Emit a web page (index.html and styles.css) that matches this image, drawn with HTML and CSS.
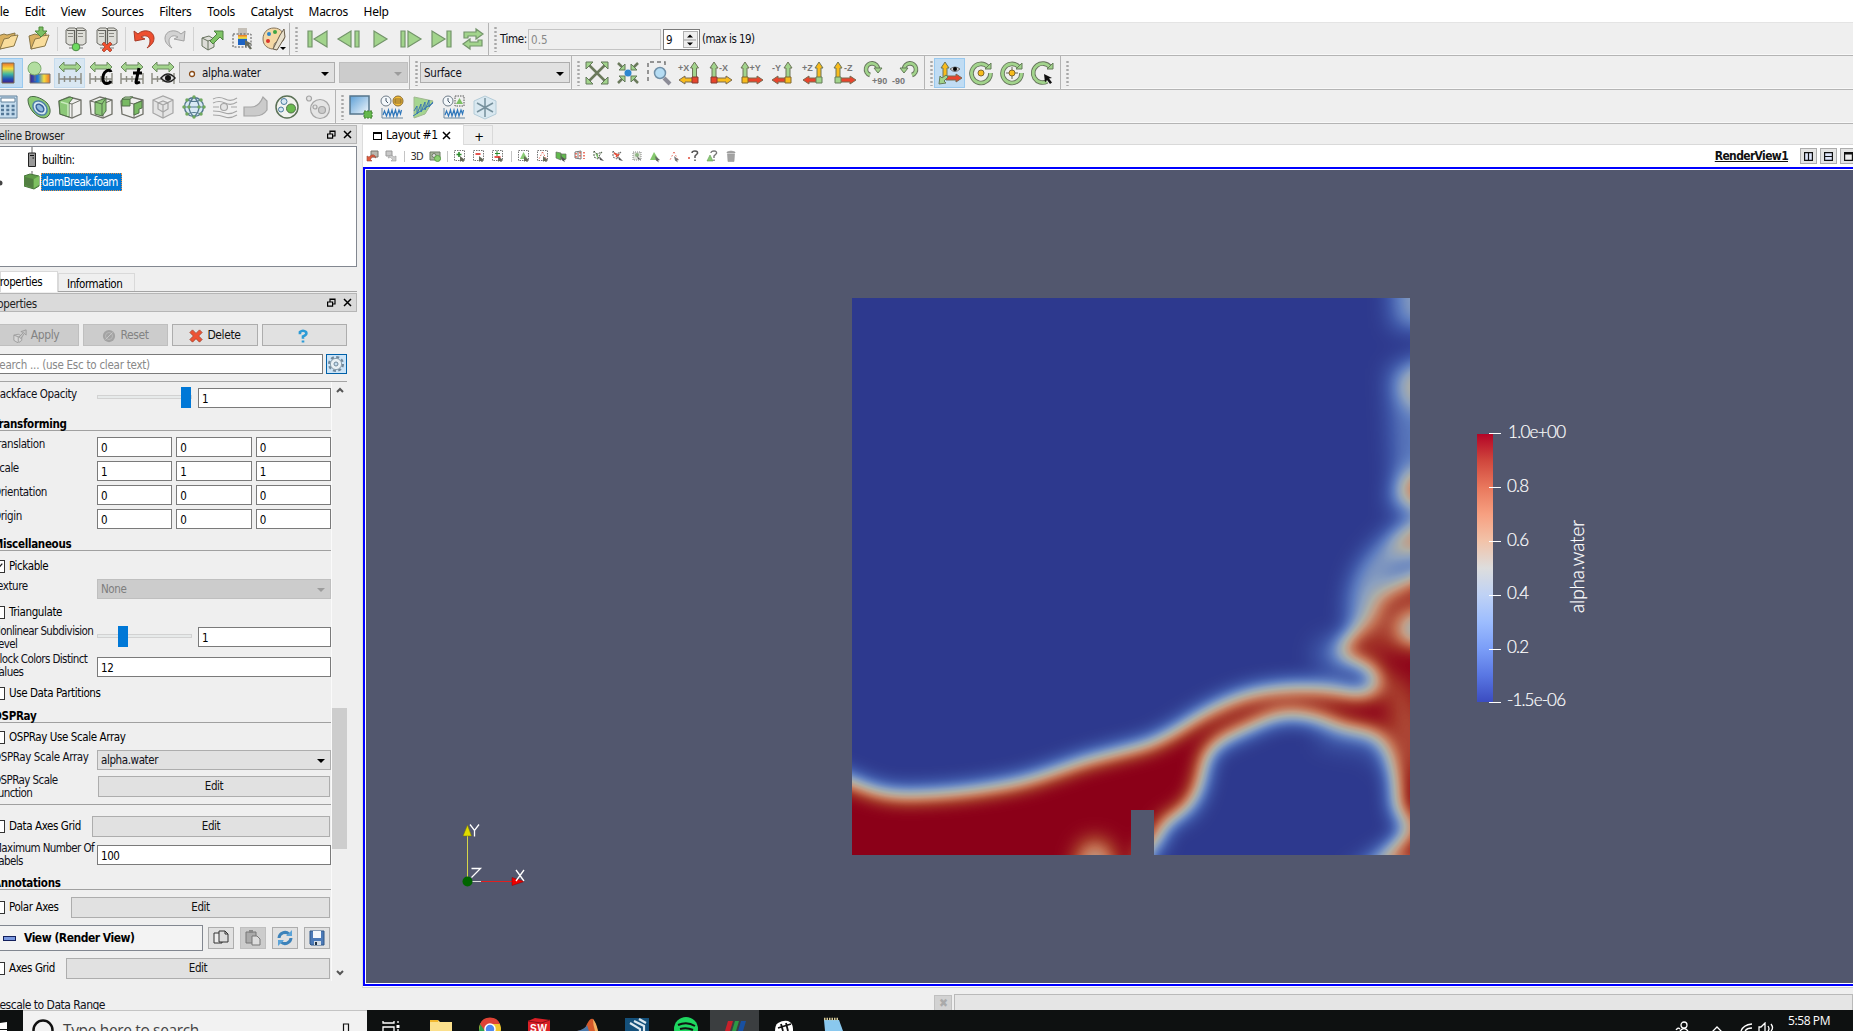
FILE: index.html
```html
<!DOCTYPE html>
<html lang="en">
<head>
<meta charset="utf-8">
<title>ParaView</title>
<link rel="stylesheet" href="styles.css">
</head>
<body>
<svg class="defs" aria-hidden="true">
  <defs>
    <linearGradient id="rainbow" x1="0" y1="0" x2="0" y2="1"><stop offset="0" stop-color="#e8722a"/><stop offset=".28" stop-color="#f8dc3c"/><stop offset=".55" stop-color="#3fb8a0"/><stop offset=".8" stop-color="#1e50b8"/><stop offset="1" stop-color="#45208a"/></linearGradient>
    <linearGradient id="rainbowH"><stop offset="0" stop-color="#45208a"/><stop offset=".4" stop-color="#1e80d8"/><stop offset=".7" stop-color="#f8dc3c"/><stop offset="1" stop-color="#e8722a"/></linearGradient>
    <linearGradient id="sky" x1="0" y1="0" x2="1" y2="1"><stop offset="0" stop-color="#5c9fd6"/><stop offset="1" stop-color="#f4f9fd"/></linearGradient>
    <symbol id="folder" viewBox="0 0 24 24"><path d="M2 9l6-2 3 1 8-2-1 12-14 4z" fill="#d9b060" stroke="#8a7748"/><path d="M4 22l4-10 5-1 2-2 7-1-4 11z" fill="#f9dd9c" stroke="#8a7748"/></symbol>
    <symbol id="servers" viewBox="0 0 24 24"><path d="M2 3l3-2h6l1 1 1-1h6l3 2v13l-3 2H5l-3-2z" fill="#deded8" stroke="#6c6c66"/><path d="M3 3.500h7.500v13M13 3.500h8M12.500 2v15" fill="none" stroke="#62625c" stroke-width="1.200"/><path d="M4 6.500h5M14 6.500h5M4 9.500h5M14 9.500h5" stroke="#8a8a84" stroke-width="1"/><path d="M5 21h14M12 17v4" stroke="#777"/></symbol>
    <symbol id="cube" viewBox="0 0 24 24"><path d="M1 6l10-4 12 3v14l-9 4-12-4z" fill="#f0f0ee" stroke="#6f7068" stroke-width="1.300"/><path d="M1 6l13 3 9-4M14 9v14" fill="none" stroke="#6f7068"/></symbol>
    <symbol id="range" viewBox="0 0 24 24"><path d="M1 6l5-5v3h12V1l5 5-5 5V8H6v3z" fill="#a2d48c" stroke="#6d8a60"/><path d="M1 12v11M23 12v11M1 18h22M6.500 15v6M12 15v6M17.500 15v6" fill="none" stroke="#8b8b82" stroke-width="1.400"/></symbol>
    <symbol id="up" viewBox="0 0 24 24"><path d="M5 1l4 6H7v10H3V7H1z" stroke="#6d7558"/></symbol>
    <symbol id="side" viewBox="0 0 24 24"><path d="M1 19l6-4v2h10v4H7v2z" stroke="#7a6a50"/></symbol>
    <symbol id="selbox" viewBox="0 0 12 12"><path d="M.5.500h10v10H.5z" fill="none" stroke="#777" stroke-dasharray="1.500 1"/><path d="M6 6l5 4-2 .3 1 2-1 .5-1-2-2 1z" fill="#666a58"/></symbol>
    <symbol id="float" viewBox="0 0 9 9"><path d="M3 1h5v5H3zM3 1.500h5" fill="none" stroke="#000" stroke-width="1.200"/><path d="M.6 4h5v4.200h-5z" fill="#ddd" stroke="#000" stroke-width="1.200"/></symbol>
    <symbol id="close" viewBox="0 0 9 9"><path d="M1 1l7 7M8 1L1 8" stroke="#000" stroke-width="1.500"/></symbol>
    <symbol id="clockwave" viewBox="0 0 24 24"><circle cx="6" cy="6" r="5" fill="#f4f8fb" stroke="#6f7c88"/><path d="M6 3v3l2 2" fill="none" stroke="#456"/><path d="M2 13v10h21" fill="none" stroke="#6d89a0"/><path d="M3 20l1.500-4 2 5 2-6 1.500 6 2-6 1.500 6 2-6 1.500 6 2-6 1.500 4 1-4" fill="none" stroke="#2f77bb" stroke-width="1.200"/></symbol>
  </defs>
</svg>

<nav class="menubar"><span class="cut">File</span><span>Edit</span><span>View</span><span>Sources</span><span>Filters</span><span>Tools</span><span>Catalyst</span><span>Macros</span><span>Help</span></nav>

<div class="toolbar">
  <div class="group shifted">
    <i class="tb"><svg><use href="#folder"/></svg></i>
    <i class="tb"><svg viewBox="0 0 24 24"><use href="#folder"/><path d="M12 0h4v4h4l-6 6-6-6h4z" fill="#7cbf62" stroke="#4f8a3c"/></svg></i>
    <i class="sep"></i>
    <i class="tb"><svg viewBox="0 0 24 24"><use href="#servers"/><circle cx="12" cy="20" r="3.800" fill="#6edb60" stroke="#4b8a45"/></svg></i>
    <i class="tb"><svg viewBox="0 0 24 24"><use href="#servers"/><path d="M9 15l3 3 3-3 2 2-3 3 3 3-2 2-3-3-3 3-2-2 3-3-3-3z" fill="#f0502e" stroke="#9e3a26" stroke-width=".7"/></svg></i>
    <i class="sep"></i>
    <i class="tb"><svg viewBox="0 0 24 24"><path d="M2 4l1 10 10-2-4-2c5-3 9 0 9 4 0 3-1 5-3 7 5-3 7-6 7-10C22 4 12 1 6 7z" fill="#ee4f30" stroke="#a83a26"/></svg></i>
    <i class="tb"><svg viewBox="0 0 24 24"><path d="M22 4l-1 10-10-2 4-2c-5-3-9 0-9 4 0 3 1 5 3 7-5-3-7-6-7-10C2 4 12 1 18 7z" fill="#d2d2d2" stroke="#a2a2a2"/></svg></i>
    <i class="sep"></i>
    <i class="tb"><svg viewBox="0 0 24 24"><path d="M2 11l7-2 5 3v8l-6 3-6-4z" fill="#ddddd8" stroke="#67725e"/><path d="M2 11l6 3 6-2M8 14v9" fill="none" stroke="#67725e"/><path d="M10 14l7-7-3-3h9v9l-3-3-7 7z" fill="#7fc466" stroke="#4f8040"/></svg></i>
    <i class="tb"><svg viewBox="0 0 24 24"><path d="M7 1h9v7H7z" fill="#c5c0b8"/><path d="M7 8h9v10H7z" fill="url(#rainbow)"/><path d="M7 12h9v6H7z" fill="#1c63c4"/><path d="M2 7h18v13H2z" fill="none" stroke="#555" stroke-dasharray="2 1.500"/><path d="M14 13l7 4-3 .5 3 4-2 1-3-4-2 2z" fill="#666a5c"/></svg></i>
    <i class="tb"><svg viewBox="0 0 24 24"><path d="M12 1C5 1 1 6 1 12s4 9 9 10c3 0 1-4 3-6s8 1 9-4-3-11-10-11z" fill="#f4d8a4" stroke="#84745c"/><circle cx="7" cy="7" r="2" fill="#2d86cc"/><circle cx="13" cy="5" r="2" fill="#3ea442"/><circle cx="6" cy="14" r="2" fill="#db352a"/><path d="M11 22l7-14 4-6 1 8-8 13z" fill="#e8e0cc" stroke="#675b48"/><path d="M18 20h6l-3 3z" fill="#000"/></svg></i>
  </div>
  <div class="group">
    <i class="grip"></i>
    <i class="tb"><svg viewBox="0 0 24 24" class="play"><path d="M2 4h4v16H2zM21 4v16L8 12z"/></svg></i>
    <i class="tb"><svg viewBox="0 0 24 24" class="play"><path d="M18 4h4v16h-4zM14 4v16L1 12z"/></svg></i>
    <i class="tb"><svg viewBox="0 0 24 24" class="play"><path d="M6 4v16l13-8z"/></svg></i>
    <i class="tb"><svg viewBox="0 0 24 24" class="play"><path d="M2 4h4v16H2zM9 4v16l13-8z"/></svg></i>
    <i class="tb"><svg viewBox="0 0 24 24" class="play"><path d="M17 4h4v16h-4zM2 4v16l13-8z"/></svg></i>
    <i class="tb"><svg viewBox="0 0 24 24" class="play"><path d="M3 11V5h12V2l7 5-7 5V9H7v2zM21 13v6H9v3l-7-5 7-5v3h8v-2z"/></svg></i>
  </div>
  <div class="group timegroup">
    <i class="grip"></i>
    <span class="tlabel">Time:</span><span class="time">0.5</span>
    <span class="spin"><b>9</b><i><svg viewBox="0 0 12 16"><path d="M0 8h12" stroke="#999"/><path d="M3 5.500h6L6 2.500zM3 10.500h6l-3 3z"/></svg></i></span><span class="max">(max is 19)</span>
  </div>
</div>

<div class="toolbar">
  <div class="group shifted">
    <i class="tb on"><svg viewBox="0 0 24 24"><path d="M6 2h12v20H6z" fill="url(#rainbow)" stroke="#7a6c50"/></svg></i>
    <i class="tb"><svg viewBox="0 0 24 24"><path d="M3 13h20v9H3z" fill="url(#rainbowH)" stroke="#777"/><circle cx="7.500" cy="7.500" r="6.500" fill="#b2dea0" stroke="#7cab6c"/><path d="M8 14v6" stroke="#777"/></svg></i>
    <i class="tb soft"><svg><use href="#range"/></svg></i>
    <i class="tb"><svg viewBox="0 0 24 24"><use href="#range"/><path d="M22 11c-1-4-9-1-8 8 1 5 6 4 8 1" fill="none" stroke="#000" stroke-width="3"/></svg></i>
    <i class="tb"><svg viewBox="0 0 24 24"><use href="#range"/><path d="M19 7l-3 14q0 2 4 0M13 12h9" fill="none" stroke="#000" stroke-width="3"/></svg></i>
    <i class="tb"><svg viewBox="0 0 24 24"><use href="#range"/><path d="M10 17q7-8 14 0-7 8-14 0z" fill="#ddd" stroke="#222" stroke-width="1.500"/><circle cx="17" cy="17" r="3" fill="#111"/></svg></i>
    <span class="select array"><svg viewBox="0 0 8 8" class="pt"><circle cx="4" cy="4" r="2.500" fill="#fff" stroke="#8a4b16" stroke-width="1.300"/></svg>alpha.water<em></em></span>
    <span class="select comp off"><em></em></span>
  </div>
  <div class="group repgroup"><i class="grip"></i><span class="select rep">Surface<em></em></span></div>
  <div class="group camgroup">
    <i class="grip"></i>
    <i class="tb"><svg viewBox="0 0 24 24"><path d="M4 4l16 16M20 4L4 20" stroke="#6b7a5c" stroke-width="2.500"/><path d="M1 1h7L1 8zM23 1h-7l7 7zM1 23h7l-7-7zM23 23h-7l7-7z" fill="#a2d48c" stroke="#63785a"/></svg></i>
    <i class="tb"><svg viewBox="0 0 24 24"><path d="M2 2l6 6M22 2l-6 6M2 22l6-6M22 22l-6-6" stroke="#6b7a5c" stroke-width="2.500"/><path d="M9 3v6H3zM15 3v6h6zM9 21v-6H3zM15 21v-6h6z" fill="#a2d48c" stroke="#63785a"/><circle cx="12" cy="12" r="3.500" fill="#2d86d0"/></svg></i>
    <i class="tb"><svg viewBox="0 0 24 24"><path d="M1 20V1h17v4" fill="none" stroke="#777" stroke-width="1.500" stroke-dasharray="4 3"/><path d="M17 17l6 6" stroke="#8d8d98" stroke-width="4"/><circle cx="13" cy="12" r="5.500" fill="#b5dcf3" stroke="#7090a8" stroke-width="1.500"/></svg></i>
    <i class="tb"><svg viewBox="0 0 24 24"><use href="#up" x="11.500" fill="#a2d48c"/><use href="#side" fill="#f8bb1c"/><path d="M14 16h6v6h-6z" class="rd"/><text x="0" y="10">+X</text></svg></i>
    <i class="tb"><svg viewBox="0 0 24 24"><use href="#up" fill="#a2d48c"/><use href="#side" fill="#f8bb1c" transform="matrix(-1 0 0 1 24 0)"/><path d="M2 16h6v6H2z" class="rd"/><text x="10" y="10">-X</text></svg></i>
    <i class="tb"><svg viewBox="0 0 24 24"><use href="#up" fill="#a2d48c"/><use href="#side" fill="#e8442c" transform="matrix(-1 0 0 1 24 0)"/><path d="M2 16h6v6H2z" class="yl"/><text x="9.500" y="10">+Y</text></svg></i>
    <i class="tb"><svg viewBox="0 0 24 24"><use href="#up" x="12" fill="#a2d48c"/><use href="#side" fill="#e8442c"/><path d="M14 16h6v6h-6z" class="yl"/><text x="1" y="10">-Y</text></svg></i>
    <i class="tb"><svg viewBox="0 0 24 24"><use href="#up" x="12" fill="#f8bb1c"/><use href="#side" fill="#e8442c"/><path d="M14 16h6v6h-6z" class="gn"/><text x="0" y="10">+Z</text></svg></i>
    <i class="tb"><svg viewBox="0 0 24 24"><use href="#up" fill="#f8bb1c"/><use href="#side" fill="#e8442c" transform="matrix(-1 0 0 1 24 0)"/><path d="M2 16h6v6H2z" class="gn"/><text x="11" y="10">-Z</text></svg></i>
    <i class="tb"><svg viewBox="0 0 24 24"><path d="M6 14A6 6 0 1 1 14 8" class="ro"/><path d="M6 14A6 6 0 1 1 14 8" class="ri"/><path d="M10 7h8l-4 5z" class="gn"/><text x="8" y="23">+90</text></svg></i>
    <i class="tb"><svg viewBox="0 0 24 24"><path d="M17 14A6 6 0 1 0 9 8" class="ro"/><path d="M17 14A6 6 0 1 0 9 8" class="ri"/><path d="M13 7H5l4 5z" class="gn"/><text x="-3" y="23">-90</text></svg></i>
  </div>
  <div class="group rotgroup">
    <i class="grip"></i>
    <i class="tb on"><svg viewBox="0 0 24 24"><use href="#up" x="2" fill="#f8bb1c"/><use href="#side" fill="#e8442c" transform="matrix(-1 0 0 1 25 -2)"/><path d="M1 23l1-8 2 2 4-3 2 2-4 4 2 2z" class="gn"/><path d="M12 8q5-4 10 0-5 5-10 0z" fill="#ccc" stroke="#555" stroke-width=".8"/><circle cx="17" cy="8" r="2"/></svg></i>
    <i class="tb"><svg viewBox="0 0 24 24"><path d="M19 6A9.500 9.500 0 1 0 21.500 12" class="ro"/><path d="M19 6A9.500 9.500 0 1 0 21.500 12" class="ri"/><path d="M22 2v6h-6z" class="gn"/><circle cx="12" cy="12" r="3" class="yl"/></svg></i>
    <i class="tb"><svg viewBox="0 0 24 24"><path d="M19 6A9.500 9.500 0 1 0 21.500 12" class="ro"/><path d="M19 6A9.500 9.500 0 1 0 21.500 12" class="ri"/><path d="M22 2v6h-6z" class="gn"/><path d="M12 6v12M6 12h12" stroke="#665"/><circle cx="12" cy="12" r="3" class="yl"/></svg></i>
    <i class="tb"><svg viewBox="0 0 24 24"><path d="M19 6A9.500 9.500 0 1 0 16 20.500" class="ro"/><path d="M19 6A9.500 9.500 0 1 0 16 20.500" class="ri"/><path d="M22 2v6h-6z" class="gn"/><path d="M13 13l8 4-3 .6 3 4-2 1.400-3-4-2 2.500z" fill="#111"/></svg></i>
  </div>
  <div class="group"><i class="grip"></i></div>
</div>

<div class="toolbar">
  <div class="group shifted filters">
    <i class="tb"><svg viewBox="0 0 24 24"><path d="M3 1h18v22H3z" fill="#c5dcee" stroke="#60809a"/><path d="M5 3h14v4H5z" fill="#fff" stroke="#60809a"/><path d="M5 11h14M5 15h14M5 19h14" stroke="#547898" stroke-width="2.500" stroke-dasharray="3 2.300"/></svg></i>
    <i class="tb"><svg viewBox="0 0 24 24"><path d="M1 5C1-1 13 1 20 8c5 6 4 14-3 15C9 23 1 13 1 5z" fill="#8bca74" stroke="#4a6b48"/><ellipse cx="13" cy="13" rx="8" ry="6" transform="rotate(45 13 13)" fill="#d6e8f2" stroke="#4c7fa8" stroke-width="1.500"/><ellipse cx="13" cy="13" rx="4.500" ry="3" transform="rotate(45 13 13)" fill="#8fb9dc" stroke="#365f9a" stroke-width="1.500"/></svg></i>
    <i class="tb"><svg viewBox="0 0 24 24"><use href="#cube"/><path d="M1 6l11-4 3 1-4 5v14l-9-3z" fill="#8cc878" stroke="#52704a"/><path d="M3 7l7 2v12" fill="none" stroke="#c9eabd" stroke-width="1.500"/></svg></i>
    <i class="tb"><svg viewBox="0 0 24 24"><use href="#cube"/><path d="M6 7l11-4v13l-4 5-7-2z" fill="#8cc878" stroke="#52704a"/><path d="M6 7l7 2v12M13 9l4-6" fill="none" stroke="#52704a"/></svg></i>
    <i class="tb"><svg viewBox="0 0 24 24"><use href="#cube"/><path d="M2 4h8v7H2zM14 9l8-3v7l-3 1v4l-5 2z" fill="#78ba62" stroke="#52704a"/><path d="M2 4l3-2h8l-3 2z" fill="#bce0ae" stroke="#52704a"/></svg></i>
    <i class="tb"><svg viewBox="0 0 24 24" class="faint"><path d="M2 5l10-4 10 4v13l-10 5-10-5zM2 5l10 5 10-5M12 10v13M7 8l5-2 5 2v6l-5 3-5-3z"/></svg></i>
    <i class="tb"><svg viewBox="0 0 24 24"><circle cx="12" cy="12" r="9.500" fill="#d8e9f4" stroke="#53788e" stroke-width="1.400"/><path d="M2 12h20M12 2q-10 10 0 20M12 2q10 10 0 20M5 5q7 3 14 0M5 19q7-3 14 0" fill="none" stroke="#53788e" stroke-width="1.200"/><path d="M12 2v.1M7 12v.1M17 12v.1M12 22v.1M2 12v.1M22 12v.1M5 5v.1M19 5v.1M5 19v.1M19 19v.1" stroke="#6fa95e" stroke-width="3.500" stroke-linecap="round"/></svg></i>
    <i class="tb"><svg viewBox="0 0 24 24" class="faint"><path d="M0 4q6-3 12 0t12-1M0 8q6-3 12 0t12-1M0 16q7 0 12 2t12-2M0 20q7 0 12 2t12-2M0 12h6M18 12h6" fill="none"/><circle cx="11" cy="12" r="3.500"/></svg></i>
    <i class="tb"><svg viewBox="0 0 24 24" class="faint"><path class="fl" d="M0 12h7q8 0 12-10l4 4v9q-4 6-12 6H0z"/></svg></i>
    <i class="tb"><svg viewBox="0 0 24 24"><circle cx="12" cy="12" r="11" fill="#f2f3ef" stroke="#5b7156" stroke-width="1.500"/><circle cx="9" cy="6.500" r="3" fill="#d6e8f4" stroke="#4b7ca0"/><circle cx="6" cy="14.500" r="2.500" fill="#d6e8f4" stroke="#4b7ca0"/><circle cx="16" cy="13.500" r="4.500" fill="#69ba4e" stroke="#52704a"/></svg></i>
    <i class="tb"><svg viewBox="0 0 24 24" class="faint"><circle cx="3" cy="3.500" r="2.500"/><circle cx="14" cy="14" r="9.500"/><circle cx="9" cy="12" r="2"/><circle cx="16" cy="15" r="3.500" class="fl"/></svg></i>
  </div>
  <div class="group datagroup">
    <i class="grip"></i>
    <i class="tb"><svg viewBox="0 0 24 24"><path d="M1 1h19v18H1z" fill="url(#sky)" stroke="#55768c" stroke-width="1.500"/><path d="M15 16h8v7h-8z" fill="#64b84c" stroke="#417a32" stroke-dasharray="2 1"/></svg></i>
    <i class="tb"><svg viewBox="0 0 24 24"><use href="#clockwave"/><circle cx="18" cy="6" r="5" fill="#f5bd37" stroke="#8a6c30"/><path d="M15 4h6v4h-6zM15 6h6" fill="none" stroke="#8a6c30"/></svg></i>
    <i class="tb"><svg viewBox="0 0 24 24"><path d="M3 2l19 4-8 13-11 4z" fill="#a5d590" stroke="#a0b890"/><path d="M2 21L22 8" stroke="#2f77bb"/><path d="M3 16l3-5 0 8 4-10 0 8 4-10 0 8 4-10 0 7 4-5" fill="none" stroke="#3b76b0"/></svg></i>
    <i class="tb"><svg viewBox="0 0 24 24"><use href="#clockwave"/><path d="M13 1h9v10h-9z" fill="none" stroke="#555" stroke-dasharray="1.500 1"/><path d="M17.500 3l3.500 6h-7z" fill="#7cc064"/></svg></i>
    <i class="tb"><svg viewBox="0 0 24 24"><path d="M1 6L12 1l11 5v13l-11 5-11-5z" fill="#d9e8f0" stroke="#b4ccd8"/><path d="M12 3v19M4 8l16 9M20 8L4 17" stroke="#76909c" stroke-width="1.500"/></svg></i>
  </div>
</div>

<main class="work">
  <aside class="dock">
    <header class="dtitle"><span class="pipe">Pipeline Browser</span><svg><use href="#float"/></svg><svg><use href="#close"/></svg></header>
    <section class="tree">
      <div class="node"><svg class="srv" viewBox="0 0 8 20"><path d="M4 0v6" stroke="#666"/><path d="M.5 6h7v13.500h-7z" fill="#999" stroke="#222"/><path d="M2 8.500h4M4.500 11h1.500" stroke="#111"/></svg><span>builtin:</span></div>
      <div class="node sel"><svg class="eye" viewBox="0 0 3 8"><circle cx="0" cy="4" r="2.500" fill="#444"/></svg><svg class="cb" viewBox="0 0 16 18"><path d="M8 0v4" stroke="#666"/><path d="M0 5l6-2 9 2v10l-5 3-10-3z" fill="#5f9a48" stroke="#47753a"/><path d="M1 6l8 2v9l-8-3z" fill="#527f42"/><path d="M10 8l5-3v9l-5 3z" fill="#7dc060"/></svg><span>damBreak.foam</span></div>
    </section>
    <div class="dtabs"><span class="act">Properties</span><span>Information</span></div>
    <header class="dtitle"><span class="prop">Properties</span><svg><use href="#float"/></svg><svg><use href="#close"/></svg></header>
    <div class="actions">
      <span class="btn dis a1"><svg viewBox="0 0 16 16"><path d="M1 7l5-1 4 2v5l-4 3-5-3zM1 7l5 2 4-1M6 9v6" fill="#d7d7d7" stroke="#999"/><path d="M7 9l5-5-3-1 6-2v6l-2-2-4 6z" fill="#c5c5c5" stroke="#9a9a9a"/></svg>Apply</span>
      <span class="btn dis a2"><svg viewBox="0 0 16 16"><circle cx="8" cy="8" r="7" fill="#a3a3a3"/><circle cx="8" cy="8" r="4" fill="none" stroke="#bbb"/><path d="M4 12l8-8" stroke="#ccc"/></svg>Reset</span>
      <span class="btn a3"><svg viewBox="0 0 16 16"><path d="M4 1l4 4 4-4 3 3-4 4 4 4-3 3-4-4-4 4-3-3 4-4-4-4z" fill="#ee5233" stroke="#a54a35"/></svg>Delete</span>
      <span class="btn a4"><svg viewBox="0 0 16 16"><path d="M4.500 6V3.500q3.500-3 7 0 1.500 3-3.500 5V11M8 13v2.500" fill="none" stroke="#2c9bd6" stroke-width="3"/></svg></span>
    </div>
    <div class="find"><span class="search">Search ... (use Esc to clear text)</span><span class="gear"><svg viewBox="0 0 18 18"><circle cx="9" cy="9" r="6.800" fill="none" stroke="#72889a" stroke-width="2.500" stroke-dasharray="3 2.340"/><circle cx="9" cy="9" r="5.600" fill="#eaf1f5" stroke="#8ca0ae"/><circle cx="9" cy="9" r="2" fill="#c4ddef" stroke="#73899a"/></svg></span></div>
    <div class="scroll">
      <div class="props">
        <div class="row first"><label>Backface Opacity</label><span class="slider full"><i></i></span><span class="in w">1</span></div>
        <h4>Transforming</h4>
        <div class="row vec"><label>Translation</label><span class="in">0</span><span class="in">0</span><span class="in">0</span></div>
        <div class="row vec"><label>Scale</label><span class="in">1</span><span class="in">1</span><span class="in">1</span></div>
        <div class="row vec"><label>Orientation</label><span class="in">0</span><span class="in">0</span><span class="in">0</span></div>
        <div class="row vec"><label>Origin</label><span class="in">0</span><span class="in">0</span><span class="in">0</span></div>
        <h4 class="gap3">Miscellaneous</h4>
        <div class="row chk pick"><i class="box"><svg viewBox="0 0 13 13"><path d="M2 6l3 4 6-7" fill="none" stroke="#222" stroke-width="1.500"/></svg></i>Pickable</div>
        <div class="row tex"><label>Texture</label><span class="select none off">None<em></em></span></div>
        <div class="row chk tri"><i class="box"></i>Triangulate</div>
        <div class="row non"><label class="two">Nonlinear Subdivision<br>Level</label><span class="slider low"><i></i></span><span class="in w">1</span></div>
        <div class="row blk"><label class="two">Block Colors Distinct<br>Values</label><span class="in">12</span></div>
        <div class="row chk use"><i class="box"></i>Use Data Partitions</div>
        <h4 class="gap1">OSPRay</h4>
        <div class="row chk osp"><i class="box"></i>OSPRay Use Scale Array</div>
        <div class="row arr"><label>OSPRay Scale Array</label><span class="select">alpha.water<em></em></span></div>
        <div class="row fun"><label class="two">OSPRay Scale<br>Function</label><span class="btn">Edit</span></div>
        <div class="row chk dax"><i class="box"></i><b>Data Axes Grid</b><span class="btn">Edit</span></div>
        <div class="row mx"><label class="two">Maximum Number Of<br>Labels</label><span class="in">100</span></div>
        <h4 class="gap2">Annotations</h4>
        <div class="row chk pol"><i class="box"></i><b>Polar Axes</b><span class="btn">Edit</span></div>
        <div class="row view"><span class="vbtn"><i></i>View (Render View)</span>
          <span class="btn ic"><svg viewBox="0 0 16 16"><path d="M1 3h6l2 2v8H1z" fill="#eee" stroke="#333"/><path d="M6 1h6l3 3v8H6z" fill="#ddd" stroke="#333"/><path d="M12 1v3h3" fill="none" stroke="#333"/></svg></span>
          <span class="btn ic dis"><svg viewBox="0 0 16 16"><path d="M1 2h10v11H1z" fill="#aaa" stroke="#777"/><path d="M4 0h4v3H4z" fill="#888"/><path d="M7 6h5l3 3v6H7z" fill="#ddd" stroke="#777"/></svg></span>
          <span class="btn ic"><svg viewBox="0 0 16 16"><path d="M2 8a6 6 0 0 1 10-4M14 8a6 6 0 0 1-10 4" fill="none" stroke="#3c82ba" stroke-width="3"/><path d="M9 6h6V0zM7 10H1v6z" fill="#5ba3d8"/></svg></span>
          <span class="btn ic"><svg viewBox="0 0 16 16"><path d="M1 1h14v14H2l-1-1z" fill="#4c7ab8" stroke="#305888"/><path d="M4 1h8v7H4z" fill="#f5f8fc"/><path d="M5 11h7v4H5z" fill="#d4dde6"/><path d="M6 12h2v3H6z" fill="#234"/></svg></span>
        </div>
        <div class="row chk axg"><i class="box"></i><b>Axes Grid</b><span class="btn">Edit</span></div>
      </div>
      <div class="bar"><svg viewBox="0 0 8 6"><path d="M1 5l3-3 3 3" fill="none" stroke="#555" stroke-width="2"/></svg><i></i><svg viewBox="0 0 8 6"><path d="M1 1l3 3 3-3" fill="none" stroke="#555" stroke-width="2"/></svg></div>
    </div>
  </aside>

  <section class="pane">
    <div class="ltabs"><span class="lt act"><i></i>Layout #1<svg viewBox="0 0 9 9"><use href="#close"/></svg></span><span class="lt plus">+</span></div>
    <div class="vtools">
      <svg viewBox="0 0 12 12"><path d="M5 1h7v6H5z" fill="#b9b7ae" stroke="#77766e"/><path d="M1 6v5h5L4.500 9.500Q6 5 10 8 8 2 3 7z" fill="#e05a3c" stroke="#994836" stroke-width=".6"/></svg>
      <svg viewBox="0 0 12 12"><path d="M1 1h6v5H1z" fill="#c8c8c8" stroke="#999"/><path d="M11 6v5H6l1.500-1.500Q6 6 3 8 5 3 9 7z" fill="#ccc" stroke="#999" stroke-width=".6"/></svg>
      <i class="vs"></i><span class="d3">3D</span>
      <svg viewBox="0 0 12 12"><path d="M1 2h10v8H1z" fill="#a7b49c" stroke="#6f7a66"/><circle cx="5" cy="5.500" r="2" fill="#ddd" stroke="#6f7a66"/><circle cx="8.500" cy="8.500" r="3" fill="#8bd070" stroke="#5ca048"/></svg>
      <i class="vs"></i>
      <svg viewBox="0 0 12 12"><use href="#selbox"/><path d="M5 2v5M2.500 4.500h5" stroke="#2a8a2a" stroke-width="1.600"/></svg>
      <svg viewBox="0 0 12 12"><use href="#selbox"/><path d="M2.500 4h5" stroke="#e02a22" stroke-width="1.600"/></svg>
      <svg viewBox="0 0 12 12"><use href="#selbox"/><path d="M5 1v5M3 3.500h5" stroke="#2a8a2a"/><path d="M2.500 7h6" stroke="#e02a22" stroke-width="1.600"/></svg>
      <i class="vs"></i>
      <svg viewBox="0 0 12 12"><path d="M5.500 2l4 7H2z" fill="#8acb74"/><use href="#selbox"/></svg>
      <svg viewBox="0 0 12 12"><use href="#selbox"/><path d="M5.500 2l4 7M5.500 2L2 9" stroke="#e66a5a" stroke-dasharray="1.500 1.500"/></svg>
      <svg viewBox="0 0 12 12"><path d="M1 2l5 1v7L1 8zM6 4h5v5H6z" fill="#62b94e" stroke="#66705e" stroke-width=".7"/><path d="M6 6l5 4-2 .3 1 2-3-2z" fill="#555"/></svg>
      <svg viewBox="0 0 12 12"><path d="M1 2l6-1v8l-6-1zM4 2v6" fill="none" stroke="#777"/><path d="M2 3v5M6 2v6M10 2v7" stroke="#e6503c" stroke-dasharray="1.500 1.500" stroke-width="1.500"/></svg>
      <svg viewBox="0 0 12 12"><path d="M1 1l3 3 5-2M1 1v6l4 2M4 4l2 5M9 2L6 6" fill="none" stroke="#4d5f48" stroke-dasharray="2 1"/><path d="M2 3l3 2v4z" fill="#7abf66"/><path d="M6 6l5 5-4-1z" fill="#555"/></svg>
      <svg viewBox="0 0 12 12"><path d="M1 1l3 3 5-2M1 1v6l4 2M4 4l2 5M9 2L6 6" fill="none" stroke="#666" stroke-dasharray="2 1"/><path d="M2 3l3 2M4 7l3-3" stroke="#e6503c" stroke-width="1.700"/><path d="M6 6l5 5-4-1z" fill="#555"/></svg>
      <svg viewBox="0 0 12 12"><path d="M2 2h8v8H2z" fill="#e0e4dc" stroke="#888" stroke-dasharray="1 1"/><circle cx="6" cy="5" r="2" fill="#8fb584"/><path d="M6 6l4 4-3-1z" fill="#555"/></svg>
      <svg viewBox="0 0 12 12"><path d="M5 2l5 8H1z" fill="#84c76c"/><path d="M6 6l5 4-2 .5 1 2-3-2z" fill="#666"/></svg>
      <svg viewBox="0 0 12 12"><path d="M6 2l4 8M6 2L2 10" stroke="#e66a5a" stroke-dasharray="1.500 2"/><path d="M6 6l5 4-2 .5 1 2-3-2z" fill="#777"/></svg>
      <svg viewBox="0 0 12 12"><path d="M5 3q0-2 3-2t2.500 2.500L8 6v2M8 9.500V11" fill="none" stroke="#555" stroke-width="1.500"/><circle cx="2" cy="8" r="1" fill="#e04a38"/></svg>
      <svg viewBox="0 0 12 12"><path d="M4 5l3 6H1z" fill="#8acb74" stroke="#6a9a5a" stroke-width=".6"/><path d="M5 3q0-2 3-2t2.500 2.500L8 6v2M8 9.500V11" fill="none" stroke="#777" stroke-width="1.400"/></svg>
      <svg viewBox="0 0 12 12"><path d="M2 2q4-2 8 0v1H2zM2.500 4h7L9 11.500H3z" fill="#a3a3a3" stroke="#999" stroke-width=".6"/></svg>
      <b class="rv">RenderView1</b>
      <span class="wb"><svg viewBox="0 0 9 9"><path d="M.6.600h7.800v7.800H.6zM4.500 0v9" fill="#dfe6fa" stroke="#111" stroke-width="1.200"/></svg></span>
      <span class="wb"><svg viewBox="0 0 9 9"><path d="M.6.600h7.800v7.800H.6zM0 4.500h9" fill="#dfe6fa" stroke="#111" stroke-width="1.200"/></svg></span>
      <span class="wb"><svg viewBox="0 0 9 9"><path d="M.6.600h7.800v7.800H.6z" fill="#eee" stroke="#111" stroke-width="1.200"/><path d="M0 1.500h9" stroke="#111" stroke-width="2"/></svg></span>
    </div>
    <div class="view">
      <svg viewBox="366 170 1487 813" width="1487" height="813">
        <defs>
          <filter id="field" filterUnits="userSpaceOnUse" x="-60" y="-60" width="680" height="680" color-interpolation-filters="sRGB">
            <feGaussianBlur stdDeviation="11"/>
            <feComponentTransfer>
              <feFuncR type="table" tableValues=".18 .25 .37 .54 .675 .77 .753 .64 .549"/>
              <feFuncG type="table" tableValues=".227 .345 .49 .624 .682 .604 .424 .208 0"/>
              <feFuncB type="table" tableValues=".557 .66 .75 .753 .66 .51 .314 .16 .098"/>
            </feComponentTransfer>
          </filter>
          <clipPath id="domain"><path d="M0 0h558v557H302V512H279v45H0z"/></clipPath>
          <linearGradient id="coolwarm" x1="0" y1="0" x2="0" y2="1"><stop offset="0" stop-color="#b40426"/><stop offset=".1" stop-color="#d0473d"/><stop offset=".2" stop-color="#e9785d"/><stop offset=".3" stop-color="#f7a081"/><stop offset=".4" stop-color="#f2c3a9"/><stop offset=".5" stop-color="#dddddd"/><stop offset=".6" stop-color="#bfd2f5"/><stop offset=".7" stop-color="#9dbdfe"/><stop offset=".8" stop-color="#7b9ef8"/><stop offset=".9" stop-color="#5977e3"/><stop offset="1" stop-color="#3b4cc0"/></linearGradient>
        </defs>
        <g transform="translate(852 298)" clip-path="url(#domain)">
          <g filter="url(#field)">
            <path d="M-60-60h680v680H-60z" fill="#000"/>
            <path d="M-60 462L0 483Q26 496 50 496.500Q101 496 150 487Q168 484 184 479Q208 471 233 462L296 446Q312 439 327 430Q346 417 364 408Q382 399 402 394Q426 389 451 389Q475 389 488 392L508 396Q522 395 526 387Q529 378 517 370L505 365L478 354L492 343Q508 332 513 319Q516 308 523 301L537 291L558 279L620 258V527H560Q549 524 543 510Q545 478 537 457Q532 440 521 436L507 433Q495 432 488 429Q476 424 466 421Q450 417 436 417Q424 418 413 423L387 435Q370 442 364 447Q355 454 353 465Q351 488 340 506Q332 516 318 522L310 529Q308 545 302 550H292V620H-60z" fill="#fff"/>
            <path d="M362 430Q400 406 440 404Q470 403 488 407" fill="none" stroke="#888" stroke-width="12" opacity=".16"/>
            <path d="M505 355L515 325L535 300L600 270V345L545 352z" fill="#777" opacity=".25"/>
            <path d="M530 405L540 372L555 385L570 420L590 500L550 460z" fill="#777" opacity=".35"/>
            <path d="M490 402h50v14h-45z" fill="#fff"/>
            <ellipse cx="566" cy="331" rx="18" ry="11" fill="#000" opacity=".85"/>
            <ellipse cx="243" cy="568" rx="18" ry="26" fill="#333" opacity=".55"/>
            <path d="M500 572Q524 562 538 552L560 530H620V620H500z" fill="#fff"/>
            <path d="M490 566h130v54H490z" fill="#000" opacity=".6"/>
            <path d="M536-60h84V30H540z" fill="#444"/>
            <path d="M550-60h70V26H554z" fill="#666"/>
            <path d="M536 72Q560 52 620 62V180H541z" fill="#3c3c3c"/>
            <ellipse cx="572" cy="89" rx="24" ry="22" fill="#999"/>
            <path d="M538 205L544 180L560 168H620V212H545z" fill="#666"/>
            <ellipse cx="576" cy="192" rx="25" ry="14" fill="#fff"/>
            <path d="M620 212L558 222L538 234Q514 254 504 274Q492 302 498 330L520 325L528 292L544 272L560 258L620 250z" fill="#606060"/>
            <path d="M540 246L565 225H620V254L548 256z" fill="#c4c4c4"/>
            <path d="M480 335L460 350L464 368L498 380z" fill="#2c2c2c"/>
            <path d="M466 428L528 444L540 484L516 456L466 448z" fill="#222"/>
          </g>
        </g>
        <path d="M1477 434h16v268h-16z" fill="url(#coolwarm)"/>
        <path d="M1489 433.500h12M1489 487.500h12M1489 541.500h12M1489 595.500h12M1489 649.500h12M1489 702.500h12" stroke="#fff"/>
        <g class="scale">
          <text x="1508" y="438" textLength="58">1.0e+00</text><text x="1507" y="492" textLength="22">0.8</text><text x="1507" y="546" textLength="22">0.6</text><text x="1507" y="599" textLength="22">0.4</text><text x="1507" y="653" textLength="22">0.2</text><text x="1507" y="706" textLength="59">-1.5e-06</text>
          <text class="vert" transform="translate(1584 613) rotate(-90)" textLength="93">alpha.water</text>
        </g>
        <path d="M467.500 836v45" stroke="#d6d648"/><path d="M467.500 825l4 11h-8.500z" fill="#e0dc00" stroke="#777300" stroke-width=".5"/>
        <path d="M480 881.500h33" stroke="#e02020"/><path d="M472 881.500h9" stroke="#ddd"/><path d="M512 877.500v8l12-4z" fill="#ee0000" stroke="#800" stroke-width=".5"/>
        <circle cx="467.500" cy="881.500" r="5" fill="#006400"/>
        <path d="M470 824.500l4.500 6 4.500-6M474.500 830.500v6M471.500 868.500h9l-9 9M516 870l8 11M524 870l-8 11" fill="none" stroke="#fff" stroke-width="1.300"/>
      </svg>
    </div>
  </section>
</main>

<footer class="status"><span>Rescale to Data Range</span><i class="abort">✖</i><i class="progress"></i></footer>

<div class="taskbar">
  <span class="start"><svg viewBox="0 0 8 9"><path d="M0 1l7-1v7H0zM0 8h7v1H0z" fill="#fff"/></svg></span>
  <span class="cortana"><svg viewBox="0 0 24 14"><circle cx="12" cy="12" r="9.500" fill="none" stroke="#111" stroke-width="2.500"/></svg><b>Type here to search</b><svg class="mic" viewBox="0 0 10 14"><path d="M2.500 14V3h5v11M0 10v4M10 10v4" fill="none" stroke="#111" stroke-width="1.200"/></svg></span>
  <span class="app"><svg viewBox="0 0 24 17"><path d="M4 7v2h11V7M4 17v-4h11v4M19 7v2M19 15v2" fill="none" stroke="#fff" stroke-width="1.300"/><path d="M17.500 11h3v3h-3z" fill="#fff"/></svg></span>
  <span class="app"><svg viewBox="0 0 24 17"><path d="M1 6h8l2 2h12v9H1z" fill="#fbe08c"/><path d="M1 6h8v2H1z" fill="#f2b830"/></svg></span>
  <span class="app"><svg viewBox="0 0 24 17"><circle cx="12" cy="15" r="11" fill="#f1c730"/><path d="M2 10a11 11 0 0 1 20 0H12l-5 7H2z" fill="#de4236"/><path d="M2 10l5 7H1z" fill="#2da04c"/><circle cx="12" cy="15" r="5" fill="#4d88ef" stroke="#fff" stroke-width="1.500"/></svg></span>
  <span class="app"><svg viewBox="0 0 24 17"><path d="M1 7l7-3 15 2v11H1z" fill="#da1f26"/><path d="M1 7l13 2 9-3" fill="none" stroke="#861018"/><text x="3" y="18" class="sw">S W</text></svg></span>
  <span class="app"><svg viewBox="0 0 24 17"><path d="M1 17q8 0 10-7 3-6 6-5 3 5 5 12z" fill="#d5592a"/><path d="M1 17q8-2 10-6l2 6z" fill="#4a78a8"/><path d="M17 5q0 6 2 12h3q-2-9-5-12z" fill="#f3b060"/></svg></span>
  <span class="app"><svg viewBox="0 0 24 17"><path d="M0 4h24v13H0z" fill="#14507a"/><path d="M5 9l10 6v3M9 7l10 5v6M14 5l7 4" fill="none" stroke="#dce8f0" stroke-width="2.200"/></svg></span>
  <span class="app"><svg viewBox="0 0 24 17"><circle cx="12" cy="15" r="12" fill="#1ed760"/><path d="M4 11q9-4 17 1M6 15q7-2 13 1" fill="none" stroke="#111" stroke-width="2"/></svg></span>
  <span class="app live"><svg viewBox="0 0 24 17"><path d="M2 17L5 7h5L7 17z" fill="#c8202a"/><path d="M9 17l3-10h4l-3 10z" fill="#2d9a45"/><path d="M15 17l3-10h5l-3 10z" fill="#1850a0"/></svg></span>
  <span class="app"><svg viewBox="0 0 24 17"><path d="M3 17q0-6 3-8 5-3 10-2 5 2 5 8v2z" fill="#fff"/><path d="M9 10l2 7M14 9l2 8M6 14l13-4" stroke="#111" stroke-width="1.800"/></svg></span>
  <span class="app note"><svg viewBox="0 0 24 17"><path d="M3 6h15l4 11H4z" fill="#8ac8ee"/><path d="M3 5h15" stroke="#d8cc9a" stroke-width="2.500" stroke-dasharray="1.500 1"/></svg></span>
  <span class="tray"><svg class="t1" viewBox="0 0 14 10"><circle cx="9" cy="4" r="3"/><path d="M5 10q4-5 8 0M1 9q2-3 4-1"/></svg><svg class="t2" viewBox="0 0 12 7"><path d="M1 6l5-5 5 5"/></svg><svg class="t3" viewBox="0 0 12 8"><path d="M1 8q2-6 11-7M5 8q2-3 7-3"/></svg><svg class="t4" viewBox="0 0 18 9"><path d="M1 9V5h2l4-4v8M10 4q2 3 0 5M13 2q3 4 0 7"/></svg><b>5:58 PM</b></span>
</div>
</body>
</html>
```
FILE: styles.css
```css
* { box-sizing: border-box; }
html, body { margin: 0; height: 100%; overflow: hidden; }
body {
  display: flex; flex-direction: column;
  width: 1853px; height: 1031px;
  background: #efefef; color: #101018;
  font: 11.5px/13px "DejaVu Sans Condensed", "DejaVu Sans", sans-serif;
  letter-spacing: -0.4px; white-space: nowrap;
}
i, em { font-style: normal; }
.defs { position: absolute; width: 0; height: 0; }

.menubar { display: flex; flex: none; height: 23px; padding-top: 4px; background: #fff; border-bottom: 1px solid #e4e4e4; gap: 15.6px; font: 12px/16px "Noto Sans", sans-serif; letter-spacing: -0.28px; color: #000; }
.menubar .cut { margin-left: -9px; }

.toolbar { display: flex; flex: none; height: 34px; border-bottom: 1px solid #b4b4b4; box-shadow: inset 0 -1px #f8f8f8; }
.toolbar:nth-of-type(1) { height: 33px; }
.group { display: flex; align-items: center; height: 100%; border-right: 1px solid #b4b4b4; flex: none; }
.group:last-child { border-right: 0; }
.shifted { margin-left: -8px; }
.tb { display: flex; align-items: center; justify-content: center; width: 31px; height: 30px; flex: none; }
.tb svg { width: 24px; height: 24px; overflow: visible; }
.tb text { font: bold 9px "Liberation Sans", sans-serif; letter-spacing: 0; fill: #777; }
.on { background: #c0dcf3; outline: 1px solid #99c9ef; outline-offset: -1px; }
.soft { background: #d9e7f2; outline: 1px solid #c6dcee; outline-offset: -1px; }
.sep { width: 1px; height: 24px; margin: 0 2px 0 3px; background: #d2d2d2; }
.grip { width: 3px; height: 26px; margin: 0 4px 0 5px; background: radial-gradient(circle, #a8a8a8 1px, transparent 1.4px) 0 0 / 3px 4px; }
.play path { fill: #a2d48c; stroke: #73946a; stroke-width: 1.2; }
.faint * { fill: #e4e4e4; stroke: #a5a5a5; stroke-width: 1.2; }
.faint [fill="none"] { fill: none; }
.faint .fl { fill: #cbcbcb; }
.rd { fill: #e8442c; stroke: #843c30; }
.yl { fill: #f8bb1c; stroke: #806830; }
.gn { fill: #a2d48c; stroke: #647c58; }
.ro { fill: none; stroke: #66745c; stroke-width: 4.6; }
.ri { fill: none; stroke: #a2d48c; stroke-width: 2.8; }

.tlabel { width: 26px; margin-left: -1px; padding-top: 1px; }
.time { width: 133px; height: 21px; margin-left: 2px; padding: 4px 2px; border: 1px solid #c4c4c4; color: #888; letter-spacing: .1px; }
.spin { display: flex; width: 37px; height: 21px; margin: 0 2px; border: 1px solid #7a7a7a; background: #fff; justify-content: space-between; }
.spin b { font-weight: normal; padding: 4px 2px; }
.spin i { width: 15px; margin: 1px; border: 1px solid #b0b0b0; background: #eee; display: flex; }
.spin svg { width: 12px; height: 16px; }
.max { letter-spacing: -.55px; padding-top: 1px; }

.select { display: flex; align-items: center; justify-content: space-between; height: 21px; padding: 0 5px 0 3px; border: 1px solid #adadad; background: #e1e1e1; }
.select em { width: 0; border: 4px solid transparent; border-top: 4px solid #000; border-bottom: 0; }
.off { background: #ccc; border-color: #bfbfbf; color: #7e7e7e; }
.off em { border-top-color: #9c9c9c; }
.toolbar .select { letter-spacing: -.25px; padding-top: 2px; }
.array { width: 156px; margin-left: 1px; justify-content: flex-start; }
.array em { margin-left: auto; }
.array .pt { width: 8px; height: 8px; margin: 0 6px 0 5px; }
.comp { width: 69px; margin-left: 4px; margin-right: 1px; justify-content: flex-end; }
.rep { width: 150px; margin-left: -2px; }
.repgroup { padding-right: 1px; }
.camgroup { padding-right: 2px; }
.camgroup .grip, .rotgroup .grip { margin-right: 1px; }
.rotgroup { padding-right: 2px; }
.filters { padding-right: 2px; }
.datagroup .grip { margin-right: 1px; }

.work { display: flex; flex: none; height: 865px; }
.dock { width: 357px; flex: none; padding-top: 1px; }
.dtitle { display: flex; align-items: center; height: 19px; padding-right: 4px; background: #dadada; border: 1px solid #b6b6b6; border-left: 0; color: #222; }
.dtitle span { flex: 1; padding-top: 4px; letter-spacing: -.35px; }
.dtitle svg { width: 9px; height: 9px; margin-left: 7px; }
.pipe { margin-left: -16px; }
.prop { margin-left: -12px; }
.tree { height: 121px; margin-top: 2px; border: 1px solid #828790; border-left: 0; background: #fff; color: #000; }
.node { display: flex; height: 22px; padding-left: 28px; align-items: flex-start; }
.node span { margin-top: 7px; }
.srv { width: 8px; height: 20px; margin-right: 6px; }
.node.sel { padding-left: 0; }
.eye { width: 3px; height: 8px; margin: 10px 21px 0 0; }
.cb { width: 16px; height: 20px; margin: 1px 1px 0 0; }
.node.sel span { margin-top: 4px; padding: 3px 4px 2px 1px; height: 18px; background: #0078d7; color: #fff; outline: 1px dotted #e89040; outline-offset: -1px; letter-spacing: -.5px; }
.dtabs { display: flex; align-items: flex-end; height: 25px; border-bottom: 1px solid #a4a4a4; margin-bottom: 1px; color: #000; }
.dtabs span { height: 18px; width: 77px; padding: 4px 9px 0 8px; border: 1px solid #d9d9d9; border-bottom: 0; }
.dtabs .act { width: 58px; padding: 4px 0; text-indent: -7px; background: #fff; margin-bottom: -1px; height: 21px; }
.actions { display: flex; height: 42px; padding-top: 12px; }
.btn { display: flex; align-items: center; justify-content: center; height: 21px; border: 1px solid #adadad; background: #e1e1e1; flex: none; color: #111; }
.btn.dis { background: #ccc; border-color: #bfbfbf; color: #838383; }
.actions .btn { height: 22px; margin-right: 4px; padding-top: 1px; font-size: 12px; }
.actions svg { width: 14px; height: 14px; margin-right: 4px; }
.a1 { width: 79px; padding-right: 6px; border-left: 0; } .a2 { width: 85px; } .a3 { width: 86px; } .a4 { width: 85px; }
.find { display: flex; height: 27px; }
.search { width: 323px; height: 20px; padding-top: 4px; border: 1px solid #7a7a7a; border-left: 0; background: #fff; color: #888; text-indent: -7px; letter-spacing: -.25px; }
.gear { display: flex; width: 21px; height: 20px; margin-left: 3px; border: 1px solid #0060a8; background: #cce4f7; }
.gear svg { width: 18px; height: 18px; }
.scroll { display: flex; height: 600px; border-top: 1px solid #a4a4a4; width: 347px; }
.props { width: 332px; flex: none; overflow: hidden; border-right: 1px solid #fafafa; }
.row { display: flex; align-items: flex-start; }
.row label { width: 104px; margin-left: -7px; padding-top: 1px; flex: none; }
.row .two { height: 26px; padding-top: 0; letter-spacing: -.58px; }
.in { height: 20px; padding: 4px 3px 0; border: 1px solid #7a7a7a; background: #fff; flex: 1; color: #000; }
.in.w { flex: none; width: 133px; margin-left: 6px; }
.row .select { flex: 1; height: 20px; padding-top: 1px; }
.slider { display: flex; align-items: center; width: 95px; height: 21px; background: linear-gradient(#e7eaea, #e7eaea) 1px 9px / 93px 2px no-repeat, linear-gradient(#d2d2d2, #d2d2d2) 0 8px / 95px 4px no-repeat; }
.slider i { width: 10px; height: 21px; background: #0078d7; }
.full i { margin-left: 84px; } .low i { margin-left: 21px; }
.first { height: 30px; padding-top: 5px; }
.first .in { margin-top: 1px; }
h4 { height: 19px; margin: 0 0 2px -7px; padding-top: 6px; border-bottom: 1px solid #a0a0a0; font-size: 11.5px; line-height: 12px; color: #000; letter-spacing: -.3px; }
.vec { height: 24px; padding-top: 4px; gap: 4px; }
.vec label { width: 100px; }
.gap3 { margin-top: 3px; } .gap1 { margin-top: 1px; } .gap2 { margin-top: 2px; }
.chk { align-items: center; color: #000; }
.chk b { font-weight: normal; }
.box { width: 13px; height: 13px; margin: 0 4px 0 -8px; border: 1px solid #333; background: #fff; flex: none; }
.box svg { width: 11px; height: 11px; display: block; }
.pick { height: 26px; padding-top: 1px; }
.tex { height: 20px; }
.tri { height: 27px; }
.non { height: 27px; } .non label { margin-top: -1px; } .non .in { margin-top: 1px; }
.blk { height: 30px; } .blk .in { margin-top: 4px; }
.use { height: 20px; }
.osp { height: 25px; }
.arr { height: 24px; }
.fun { height: 31px; border-bottom: 1px solid #a0a0a0; } .fun .btn { margin-top: 2px; margin-left: 1px; width: 232px; }
.dax { height: 37px; padding-top: 5px; } .dax b { width: 83px; } .dax .btn { width: 238px; }
.mx { height: 27px; } .mx .in { margin-top: 3px; }
.pol { height: 31px; } .pol b { width: 62px; } .pol .btn { width: 259px; }
.view.row { height: 30px; padding: 2px 0 0; border: 0; background: none; }
.vbtn { display: flex; align-items: center; width: 203px; height: 26px; margin-right: 5px; flex: none; border: 1px solid #828790; border-left: 0; font-weight: bold; font-size: 12px; letter-spacing: -.5px; color: #000; background: #f3f3f3; }
.vbtn i { width: 13px; height: 5px; margin: 0 8px 0 3px; border: 1px solid #14205c; background: #7a98e0; }
.ic { width: 26px; height: 22px; margin: 2px 6px 0 0; }
.ic:last-child { margin-right: 0; }
.ic svg { width: 16px; height: 16px; }
.axg { height: 29px; padding-top: 1px; } .axg b { width: 57px; } .axg .btn { width: 264px; }
.bar { display: flex; flex-direction: column; width: 15px; align-items: center; padding: 5px 0; }
.bar svg { width: 8px; height: 6px; }
.bar i { width: 15px; height: 141px; margin: 315px 0 121px; background: #cdcdcd; }

.pane { flex: 1; display: flex; flex-direction: column; margin-left: 5px; min-width: 0; overflow: hidden; }
.ltabs { display: flex; height: 21px; background: linear-gradient(#d9d9d9, #d9d9d9) 0 20px / 100% 1px no-repeat; align-items: flex-end; flex: none; color: #000; }
.lt { display: flex; align-items: center; height: 20px; }
.lt.act { width: 102px; padding: 1px 0 0 10px; height: 21px; background: #fff; border: 1px solid #dcdcdc; border-bottom: 0; font-size: 12px; letter-spacing: -.5px; }
.lt.act i { width: 9px; height: 8px; margin-right: 4px; border: 1px solid #000; border-top-width: 2px; }
.lt svg { width: 9px; height: 9px; margin-left: 4px; }
.plus { width: 29px; justify-content: center; border: 1px solid #d9d9d9; border-left: 0; font-size: 13px; padding: 3px 0 0 2px; }
.vtools { display: flex; align-items: center; height: 22px; background: #fff; flex: none; padding-left: 3px; border-left: 1px solid #dcdcdc; }
.vtools > svg { width: 12px; height: 12px; margin-right: 6.8px; flex: none; overflow: visible; }
.vs { width: 1px; height: 11px; background: #c4c4c4; margin: 0 6px 0 0; }
.d3 { width: 12px; margin-right: 6px; letter-spacing: -1px; color: #333; font-size: 11px; }
.rv { margin-left: auto; margin-right: 12px; text-decoration: underline; color: #111; letter-spacing: -.65px; font-size: 12px; }
.wb { display: flex; align-items: center; justify-content: center; width: 17px; height: 16px; margin-right: 3px; border: 1px solid #adadad; background: #e4e4e4; flex: none; }
.wb:last-child { margin-right: -4px; }
.wb svg { width: 9px; height: 9px; }
.view { height: 821px; flex: none; border-left: 1px solid #dcdcdc; border-bottom: 1px solid #d4d4d4; padding-bottom: 2px; background: #fff; }
.view > svg { display: block; box-sizing: content-box; background: #52576e; border: 2px solid #0000ff; border-right: 0; border-width: 2px 0 2px 2px; box-shadow: inset 1px 1px #fff, inset 0 -1px #fff; padding: 1px 0 1px 1px; }
.scale text { font: 300 17px "Lato", sans-serif; fill: #fff; stroke: #fff; stroke-width: .2px; letter-spacing: 0; }
.scale .vert { font-size: 19px; }

.status { display: flex; height: 21px; flex: none; padding-top: 5px; font-size: 12px; }
.status span { width: 934px; padding-top: 5px; text-indent: -7px; letter-spacing: -.5px; }
.abort { width: 18px; height: 16px; margin-top: 1px; padding: 1px 4px; border: 1px solid #c0c0c0; background: #d2d2d2; color: #aaa; }
.progress { flex: 1; margin-left: 2px; border: 1px solid #b9b9b9; border-bottom: 0; background: #e5e5e5; }

.taskbar { display: flex; height: 21px; background: #0e1111; overflow: hidden; flex: none; }
.start { width: 23px; padding-top: 12px; } .start svg { width: 8px; height: 9px; display: block; }
.cortana { display: flex; width: 344px; background: #f2f2f2; border-top: 1px solid #c4c4c4; }
.cortana svg { width: 24px; height: 14px; margin: 7px 8px 0 8px; }
.cortana b { flex: 1; font: 15.5px/20px "Open Sans", sans-serif; letter-spacing: -.35px; color: #444; margin-top: 9px; }
.cortana .mic { width: 10px; height: 14px; margin: 10px 16px 0 0; }
.app { display: flex; width: 49px; height: 21px; justify-content: center; padding-top: 4px; flex: none; }
.app svg { width: 24px; height: 17px; }
.app:nth-of-type(3) { width: 48px; margin-right: 1px; }
.live { background: #3b3e40; }
.sw { font: bold 10px "Liberation Sans", sans-serif; fill: #fff; letter-spacing: -1px; }
.tray { display: flex; margin-left: auto; align-items: flex-end; width: 178px; }
.tray path, .tray circle { fill: none; stroke: #fff; stroke-width: 1.3; }
.tray b { font: 12px/16px "Open Sans", sans-serif; letter-spacing: -.4px; color: #fff; margin: 0 0 2px 12px; }
.t1 { width: 14px; height: 10px; margin-right: 22px; } .t2 { width: 12px; height: 7px; margin-right: 17px; margin-bottom: -2px; } .t3 { width: 12px; height: 8px; margin-right: 6px; } .t4 { width: 18px; height: 9px; }
```
